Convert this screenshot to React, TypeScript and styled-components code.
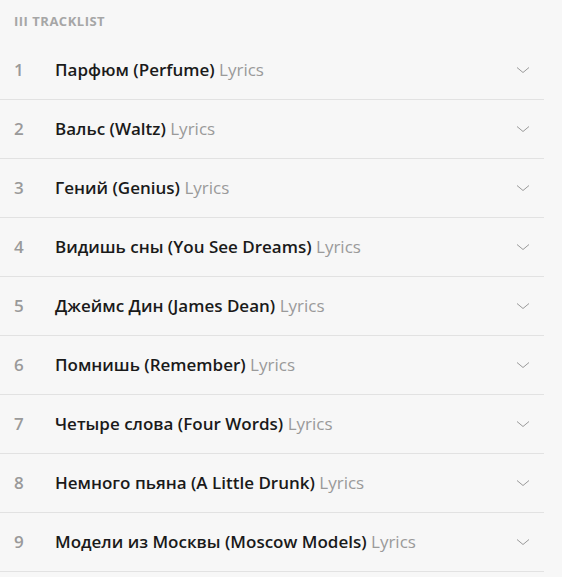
import React from "react";
import styled, { createGlobalStyle } from "styled-components";

const Global = createGlobalStyle`
  html, body { margin: 0; padding: 0; background: #f7f7f7; }
  body { font-family: "Open Sans", "Noto Sans", sans-serif; }
`;

const Wrap = styled.div`
  width: 544px;
  background: #f7f7f7;
`;

const Header = styled.div`
  height: 41px;
  box-sizing: border-box;
  display: flex;
  align-items: center;
  padding: 1px 0 0 14px;
  font-size: 13px;
  font-weight: 700;
  letter-spacing: 0.5px;
  color: #a6a6a6;
`;

const Row = styled.div`
  height: 56px;
  padding-bottom: 2px;
  display: flex;
  align-items: center;
  border-bottom: 1px solid #e2e2e2;
`;

const Num = styled.span`
  width: 55px;
  padding-left: 14px;
  box-sizing: border-box;
  font-size: 17px;
  font-weight: 600;
  color: #9a9a9a;
`;

const Title = styled.span`
  flex: 1;
  font-size: 17px;
  font-weight: 600;
  color: #1a1a1a;
`;

const Lyrics = styled.span`
  font-weight: 400;
  color: #9a9a9a;
`;

const Chevron = styled.svg`
  width: 14px;
  height: 8px;
  margin-right: 14px;
  margin-top: 2px;
`;

const tracks = [
  "Парфюм (Perfume)",
  "Вальс (Waltz)",
  "Гений (Genius)",
  "Видишь сны (You See Dreams)",
  "Джеймс Дин (James Dean)",
  "Помнишь (Remember)",
  "Четыре слова (Four Words)",
  "Немного пьяна (A Little Drunk)",
  "Модели из Москвы (Moscow Models)",
];

export default function App() {
  return (
    <Wrap>
      <Global />
      <Header>III TRACKLIST</Header>
      {tracks.map((t, i) => (
        <Row key={i}>
          <Num>{i + 1}</Num>
          <Title>
            {t} <Lyrics>Lyrics</Lyrics>
          </Title>
          <Chevron viewBox="0 0 14 8">
            <path d="M1 1.5 L7 6.5 L13 1.5" fill="none" stroke="#9a9a9a" strokeWidth="1" />
          </Chevron>
        </Row>
      ))}
    </Wrap>
  );
}
